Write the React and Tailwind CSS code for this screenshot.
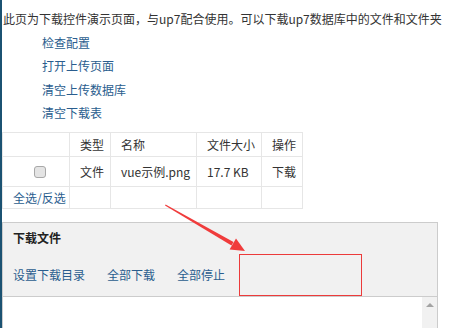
export default function App() {
  const font = { fontFamily: '"Noto Sans CJK SC", "Noto Sans", sans-serif' };
  return (
    <div
      className="relative w-[471px] h-[328px] overflow-hidden bg-white border-l-2 border-[#1b5272] text-[12px] text-[#333]"
      style={font}
    >
      {/* INTRO */}
      <div className="pt-[7px]">
        <div className="h-[24px] leading-[24px] pl-[1px] whitespace-nowrap">
          此页为下载控件演示页面，与up7配合使用。可以下载up7数据库中的文件和文件夹
        </div>
        <div className="pl-[40px] text-[#2a5d8e]">
          <div className="h-[23.3px] leading-[23.3px]">检查配置</div>
          <div className="h-[23.3px] leading-[23.3px]">打开上传页面</div>
          <div className="h-[23.3px] leading-[23.3px]">清空上传数据库</div>
          <div className="h-[23.3px] leading-[23.3px]">清空下载表</div>
        </div>
      </div>

      {/* FILE TABLE */}
      <table className="mt-[8px] border-collapse">
        <tbody>
          <tr className="h-[24px]">
            <td className="w-[67px] border border-[#e6e6e6]"></td>
            <td className="w-[41px] border border-[#e6e6e6] pl-[10px]">类型</td>
            <td className="w-[86px] border border-[#e6e6e6] pl-[10px]">名称</td>
            <td className="w-[65px] border border-[#e6e6e6] pl-[10px]">文件大小</td>
            <td className="w-[41px] border border-[#e6e6e6] pl-[10px]">操作</td>
          </tr>
          <tr className="h-[30px]">
            <td className="border border-[#e6e6e6]">
              <div className="ml-[31px] w-[12px] h-[12px] rounded-[3px] border border-[#a8a8a8] bg-[#e4e4e4]" />
            </td>
            <td className="border border-[#e6e6e6] pl-[10px]">文件</td>
            <td className="border border-[#e6e6e6] pl-[10px] whitespace-nowrap">vue示例.png</td>
            <td className="border border-[#e6e6e6] pl-[10px] whitespace-nowrap">17.7 KB</td>
            <td className="border border-[#e6e6e6] pl-[10px]">下载</td>
          </tr>
          <tr className="h-[22px]">
            <td className="border border-[#e6e6e6] pl-[10px] text-[#2a5d8e] whitespace-nowrap">全选/反选</td>
            <td className="border border-[#e6e6e6]"></td>
            <td className="border border-[#e6e6e6]"></td>
            <td className="border border-[#e6e6e6]"></td>
            <td className="border border-[#e6e6e6]"></td>
          </tr>
        </tbody>
      </table>

      {/* DOWNLOAD PANEL */}
      <div className="mt-[13px] w-[436px] border border-[#cccccc]">
        <div className="bg-[#f1f1f1] h-[74px] px-[10px] border-b border-[#cccccc]">
          <div className="pt-[5px] h-[30px] leading-[20px] font-bold text-[#222]">下载文件</div>
          <div className="mt-[12px] flex gap-[22px] text-[#2a5d8e] leading-[20px]">
            <span>设置下载目录</span>
            <span>全部下载</span>
            <span>全部停止</span>
          </div>
        </div>
        <div className="flex h-[40px]">
          <div className="flex-1" />
          <div className="w-[15px] bg-[#f1f1f1] flex justify-center pt-[6px]">
            <div className="w-0 h-0 border-l-[4px] border-r-[4px] border-b-[4px] border-l-transparent border-r-transparent border-b-[#a3a3a3]" />
          </div>
        </div>
      </div>

      {/* ANNOTATION */}
      <div className="absolute left-[237px] top-[254px] w-[123px] h-[42px] border border-[#ec3b3b]" />
      <svg className="absolute left-0 top-0 pointer-events-none" width="471" height="328">
        <polygon points="163,205.5 163.6,204.6 231.5,242 229.5,245.6" fill="#f03c3c" />
        <polygon points="243,251 227.6,249.6 234,238.4" fill="#f03c3c" />
      </svg>
    </div>
  );
}
